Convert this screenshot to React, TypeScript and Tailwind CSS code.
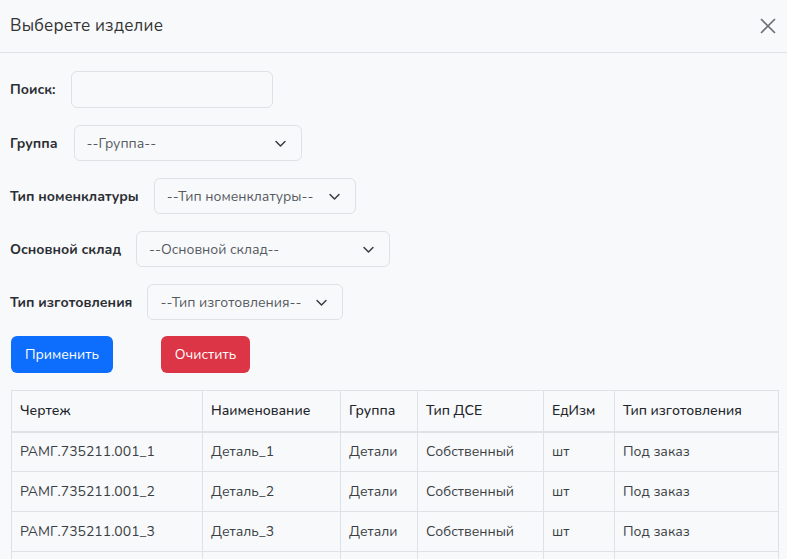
import React from 'react';

const font = { fontFamily: 'Nunito, "Noto Sans", "Open Sans", sans-serif' };

function Chevron() {
  return (
    <svg width="13" height="13" viewBox="0 0 16 16" fill="none" className="shrink-0">
      <path d="M2.5 5.5l5.5 5.5 5.5-5.5" stroke="#343a40" strokeWidth="1.8" strokeLinecap="round" strokeLinejoin="round" />
    </svg>
  );
}

function Select({ placeholder, width }: { placeholder: string; width: string }) {
  return (
    <div
      className={`flex items-center justify-between h-[36px] ${width} rounded-md border border-[#dee2e6] bg-[#f8f9fb] pl-[12px] pr-[14px] text-[14px] text-[#555a60]`}
    >
      <span className="whitespace-nowrap">{placeholder}</span>
      <Chevron />
    </div>
  );
}

const rows = [1, 2, 3].map((i) => ({
  drawing: `РАМГ.735211.001_${i}`,
  name: `Деталь_${i}`,
  group: 'Детали',
  dse: 'Собственный',
  unit: 'шт',
  make: 'Под заказ',
}));

export default function App() {
  return (
    <div className="w-[787px] h-[559px] overflow-hidden bg-[#f8f9fb] text-[#212529]" style={font}>
      <div className="flex items-center justify-between h-[53px] border-b border-[#dee2e6] pl-[10px] pr-[10px]">
        <h1 className="text-[17px] text-[#333] tracking-[0.2px]">Выберете изделие</h1>
        <svg width="16" height="16" viewBox="0 0 16 16" className="mr-[1px]">
          <path d="M1.5 1.5l13 13M14.5 1.5l-13 13" stroke="#6c6f73" strokeWidth="1.7" strokeLinecap="round" />
        </svg>
      </div>

      <div className="pl-[10px] pr-[10px] pt-[18px]">
        <div className="flex items-center gap-[15px] mb-[17px]">
          <label className="text-[14px] font-bold text-[#2b2f33]">Поиск:</label>
          <div className="h-[37px] w-[202px] rounded-md border border-[#dee2e6] bg-[#f8f9fb]" />
        </div>
        <div className="flex items-center gap-[16px] mb-[17px]">
          <label className="text-[14px] font-bold text-[#2b2f33]">Группа</label>
          <Select placeholder="--Группа--" width="w-[228px]" />
        </div>
        <div className="flex items-center gap-[15px] mb-[17px]">
          <label className="text-[14px] font-bold text-[#2b2f33]">Тип номенклатуры</label>
          <Select placeholder="--Тип номенклатуры--" width="w-[202px]" />
        </div>
        <div className="flex items-center gap-[15px] mb-[17px]">
          <label className="text-[14px] font-bold text-[#2b2f33]">Основной склад</label>
          <Select placeholder="--Основной склад--" width="w-[254px]" />
        </div>
        <div className="flex items-center gap-[15px] mb-[16px]">
          <label className="text-[14px] font-bold text-[#2b2f33]">Тип изготовления</label>
          <Select placeholder="--Тип изготовления--" width="w-[196px]" />
        </div>

        <div className="flex items-center gap-[48px] mb-[17px] pl-[1px]">
          <button className="h-[37px] w-[102px] rounded-md bg-[#0d6efd] text-white text-[14px]">Применить</button>
          <button className="h-[37px] w-[89px] rounded-md bg-[#dc3545] text-white text-[14px]">Очистить</button>
        </div>

        <table className="ml-[1px] w-[767px] border-collapse text-[14px] table-fixed">
          <colgroup>
            <col className="w-[191px]" />
            <col className="w-[138px]" />
            <col className="w-[77px]" />
            <col className="w-[126px]" />
            <col className="w-[71px]" />
            <col className="w-[164px]" />
          </colgroup>
          <thead>
            <tr className="h-[41px] border-b-2 border-[#dee2e6]">
              {['Чертеж', 'Наименование', 'Группа', 'Тип ДСЕ', 'ЕдИзм', 'Тип изготовления'].map((h) => (
                <th key={h} className="border border-[#dee2e6] border-b-2 px-[8px] text-left font-medium text-[#212529] whitespace-nowrap">
                  {h}
                </th>
              ))}
            </tr>
          </thead>
          <tbody>
            {rows.map((r) => (
              <tr key={r.drawing} className="h-[40px]">
                {[r.drawing, r.name, r.group, r.dse, r.unit, r.make].map((c, i) => (
                  <td key={i} className="border border-[#dee2e6] px-[8px] text-[#3a3f44] whitespace-nowrap">
                    {c}
                  </td>
                ))}
              </tr>
            ))}
            <tr className="h-[40px]">
              {[0, 1, 2, 3, 4, 5].map((i) => (
                <td key={i} className="border border-[#dee2e6] px-[8px]" />
              ))}
            </tr>
          </tbody>
        </table>
      </div>
    </div>
  );
}
